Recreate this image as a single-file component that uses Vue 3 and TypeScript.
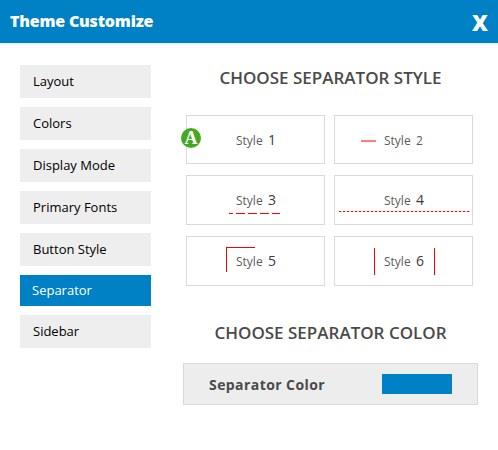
<script setup lang="ts">
import { ref } from 'vue'

interface StyleOption {
  id: number
  small?: boolean
}

const menu: string[] = ['Layout', 'Colors', 'Display Mode', 'Primary Fonts', 'Button Style', 'Separator', 'Sidebar']
const active = ref('Separator')
const options: StyleOption[] = [
  { id: 1 },
  { id: 2, small: true },
  { id: 3 },
  { id: 4 },
  { id: 5 },
  { id: 6 },
]
const selected = ref(1)
</script>

<template>
  <div class="panel">
    <header class="bar">
      <span class="title">Theme Customize</span>
      <button class="close" type="button">X</button>
    </header>
    <div class="body">
      <nav class="menu">
        <a
          v-for="item in menu"
          :key="item"
          class="item"
          :class="{ active: item === active }"
          @click="active = item"
        >{{ item }}</a>
      </nav>
      <main class="content">
        <h2 class="heading style-heading">CHOOSE SEPARATOR STYLE</h2>
        <div class="grid">
          <div v-for="o in options" :key="o.id" class="card" :class="'card-' + o.id" @click="selected = o.id">
            <span class="word">Style</span><span class="num" :class="{ small: o.small }">{{ o.id }}</span>
            <i class="mark" :class="'mark-' + o.id"></i>
            <i v-if="o.id === 6" class="mark mark-6 right"></i>
            <b v-if="o.id === selected" class="badge">A</b>
          </div>
        </div>
        <h2 class="heading color-heading">CHOOSE SEPARATOR COLOR</h2>
        <div class="color-row">
          <span class="color-label">Separator Color</span>
          <span class="swatch"></span>
        </div>
      </main>
    </div>
  </div>
</template>

<style>
body {
  margin: 0;
  background: #fff;
}
</style>

<style scoped>
.panel {
  width: 498px;
  height: 450px;
  box-sizing: border-box;
  overflow: hidden;
  font-family: "Open Sans", sans-serif;
}
.bar {
  display: flex;
  justify-content: space-between;
  height: 43px;
  padding: 0 10px;
  background: #0081c6;
  border-bottom: 1px solid #e4f1f9;
  color: #fff;
}
.title {
  font-size: 16px;
  line-height: 42px;
  font-weight: 800;
  letter-spacing: -0.2px;
}
.close {
  padding: 0;
  border: 0;
  background: none;
  color: #fff;
  font: 800 22px/42px "Open Sans", sans-serif;
}
.body {
  display: flex;
  padding-top: 21px;
}
.menu {
  display: flex;
  flex-direction: column;
  gap: 9px;
  width: 131px;
  margin-left: 20px;
}
.item {
  height: 33px;
  padding-left: 13px;
  background: #eee;
  color: #000;
  font-size: 13px;
  line-height: 33px;
}
.item.active {
  height: 31px;
  padding-left: 12px;
  background: #0081c6;
  color: #fff;
  line-height: 31px;
}
.content {
  width: 295px;
  margin-left: 32px;
}
.heading {
  margin: 0;
  color: #4a4a4a;
  font-size: 17px;
  line-height: 24px;
  font-weight: 600;
  text-align: center;
  white-space: nowrap;
}
.style-heading {
  padding-top: 1px;
}
.grid {
  display: grid;
  grid-template-columns: 139px 139px;
  grid-template-rows: 49px 50px 50px;
  gap: 11px 9px;
  margin: 25px 0 0 3px;
}
.card {
  position: relative;
  display: flex;
  align-items: baseline;
  box-sizing: border-box;
  padding: 14px 0 0 49px;
  border: 1px solid #dadada;
  line-height: 20px;
}
.word {
  width: 32px;
  color: #5c5c5c;
  font-size: 12px;
}
.num {
  color: #3c3c3c;
  font-size: 14px;
  font-weight: 500;
}
.num.small {
  color: #5c5c5c;
  font-size: 12px;
}
.card-2 {
  padding-top: 15px;
}
.mark {
  position: absolute;
}
.mark-2 {
  left: 26px;
  top: 24px;
  width: 15px;
  height: 2px;
  background: #ff7f7f;
}
.mark-3 {
  left: 42px;
  top: 37px;
  width: 51px;
  height: 1px;
  background: repeating-linear-gradient(90deg, #f00 0 4px, transparent 4px 7px, #f00 7px 16px, transparent 16px 19px, #f00 19px 28px, transparent 28px 31px, #f00 31px 40px, transparent 40px 43px, #f00 43px 51px);
}
.mark-4 {
  left: 4px;
  top: 35px;
  width: 131px;
  height: 1px;
  background: repeating-linear-gradient(90deg, #f00 0 2px, #fbb 2px 3px, #fff 3px 4px);
}
.mark-5 {
  left: 39px;
  top: 10px;
  width: 28px;
  height: 24px;
  border: solid #f00;
  border-width: 1px 0 0 1px;
}
.mark-6 {
  left: 39px;
  top: 11px;
  width: 1px;
  height: 27px;
  background: #f00;
}
.mark-6.right {
  left: 99px;
}
.badge {
  position: absolute;
  left: -6px;
  top: 12px;
  width: 20px;
  height: 20px;
  border-radius: 50%;
  background: #43a923;
  color: #fff;
  font: bold 18px/20px "Liberation Serif", serif;
  text-align: center;
}
.color-heading {
  margin-top: 35px;
}
.color-row {
  display: flex;
  align-items: center;
  justify-content: space-between;
  box-sizing: border-box;
  height: 42px;
  margin-top: 18px;
  padding: 0 25px;
  border: 1px solid #d9d9d9;
  background: #ededed;
}
.color-label {
  color: #4a4a4a;
  font-size: 14px;
  font-weight: 700;
  letter-spacing: 0.42px;
}
.swatch {
  width: 70px;
  height: 20px;
  background: #0081c6;
}
</style>
